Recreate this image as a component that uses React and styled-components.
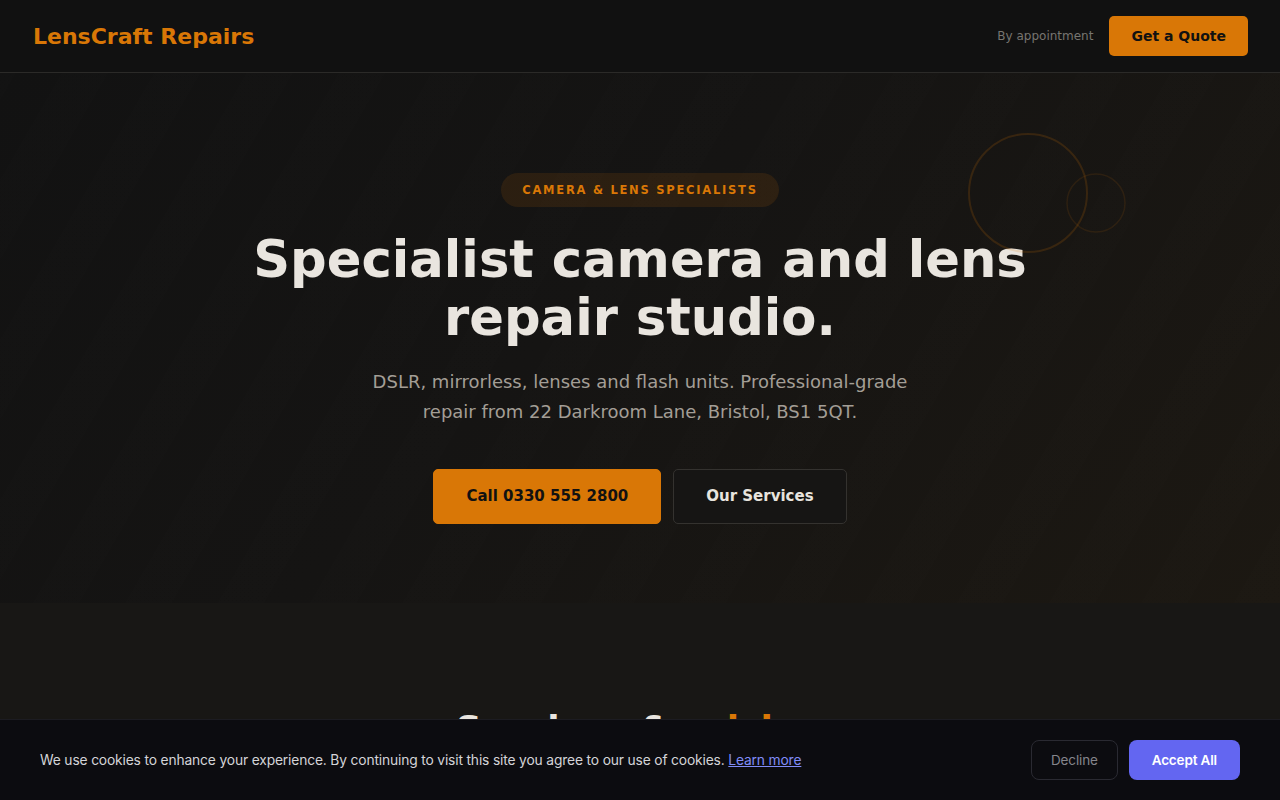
import styled, { createGlobalStyle } from "styled-components"

const GlobalStyle = createGlobalStyle`
    * { box-sizing: border-box; }
    body {
        margin: 0;
        background: #181715;
        font-family: "DejaVu Sans", "Liberation Sans", sans-serif;
        color: #e8e4de;
    }
`

export default function App(){
    return(
        <>
            <GlobalStyle/>
            <Nav>
                <Logo>LensCraft Repairs</Logo>
                <NavRight>
                    <Note>By appointment</Note>
                    <QuoteButton>Get a Quote</QuoteButton>
                </NavRight>
            </Nav>
            <Hero>
                <Rings width="200" height="140" viewBox="0 0 200 140">
                    <circle cx="80" cy="70" r="59" fill="none" stroke="rgba(217,119,6,0.17)" strokeWidth="2"/>
                    <circle cx="148" cy="80" r="29" fill="none" stroke="rgba(217,119,6,0.11)" strokeWidth="1.5"/>
                </Rings>
                <Badge>Camera &amp; Lens Specialists</Badge>
                <Title>Specialist camera and lens<br/>repair studio.</Title>
                <Lead>DSLR, mirrorless, lenses and flash units. Professional-grade repair from 22 Darkroom Lane, Bristol, BS1 5QT.</Lead>
                <Actions>
                    <Button primary>Call 0330 555 2800</Button>
                    <Button>Our Services</Button>
                </Actions>
            </Hero>
            <Services>
                <SectionTitle>Services &amp; <Accent>pricing</Accent></SectionTitle>
            </Services>
            <Cookie>
                <CookieText>
                    We use cookies to enhance your experience. By continuing to visit this site you agree to our use of cookies. <a href="#">Learn more</a>
                </CookieText>
                <CookieActions>
                    <Decline>Decline</Decline>
                    <Accept>Accept All</Accept>
                </CookieActions>
            </Cookie>
        </>
    )
}

const Nav = styled.header`
    height: 73px;
    padding: 0 32px 0 33px;
    background: #111111;
    border-bottom: 1px solid #2b2a28;
    display: flex;
    align-items: center;
    justify-content: space-between;
`

const Logo = styled.div`
    font-size: 22px;
    font-weight: 700;
    color: #d97706;
`

const NavRight = styled.div`
    display: flex;
    align-items: center;
    gap: 16px;
`

const Note = styled.span`
    font-size: 12px;
    color: #777570;
`

const QuoteButton = styled.button`
    height: 40px;
    padding: 0 22px;
    border: none;
    border-radius: 5px;
    background: #d97706;
    color: #111;
    font-family: inherit;
    font-size: 14px;
    font-weight: 700;
`

const Hero = styled.section`
    position: relative;
    height: 530px;
    padding-top: 100px;
    display: flex;
    flex-direction: column;
    align-items: center;
    text-align: center;
    overflow: hidden;
    background:
        repeating-linear-gradient(-60deg, rgba(255,255,255,0.004) 0 40px, rgba(0,0,0,0.01) 40px 80px),
        linear-gradient(135deg, #121212 0%, #151413 45%, #1c1812 100%);
`

const Rings = styled.svg`
    position: absolute;
    top: 50px;
    left: 948px;
`

const Badge = styled.div`
    height: 34px;
    padding: 0 21px;
    display: flex;
    align-items: center;
    border-radius: 17px;
    background: rgba(217,119,6,0.12);
    color: #d97706;
    font-size: 11.5px;
    font-weight: 700;
    letter-spacing: 1.75px;
    text-transform: uppercase;
`

const Title = styled.h1`
    margin: 23px 0 0;
    font-size: 51.2px;
    line-height: 1.14;
    font-weight: 700;
    color: #e9e5df;
`

const Lead = styled.p`
    margin: 20px 0 0;
    max-width: 560px;
    font-size: 18px;
    line-height: 30px;
    color: #a39e96;
`

const Actions = styled.div`
    margin-top: 42px;
    display: flex;
    gap: 12px;
`

const Button = styled.button`
    height: 55px;
    padding: 0 32px;
    border-radius: 5px;
    border: 1px solid ${p => p.primary ? "#d97706" : "#34322f"};
    background: ${p => p.primary ? "#d97706" : "#161514"};
    color: ${p => p.primary ? "#111" : "#e8e4de"};
    font-family: inherit;
    font-size: 15px;
    font-weight: 700;
`

const Services = styled.section`
    padding: 105px 0 80px;
    background: #181715;
    text-align: center;
`

const SectionTitle = styled.h2`
    margin: 0;
    font-size: 36px;
    font-weight: 700;
    color: #e9e5df;
`

const Accent = styled.span`
    color: #d97706;
`

const Cookie = styled.div`
    position: fixed;
    left: 0;
    right: 0;
    bottom: 0;
    height: 81px;
    padding: 0 40px;
    display: flex;
    align-items: center;
    justify-content: space-between;
    background: #0c0c10;
    border-top: 1px solid #1c1c22;
    font-family: Inter, "Liberation Sans", sans-serif;
    letter-spacing: -0.15px;
`

const CookieText = styled.p`
    margin: 0;
    font-size: 13.8px;
    color: #d4d4d8;

    a {
        color: #818cf8;
    }
`

const CookieActions = styled.div`
    display: flex;
    gap: 11px;
`

const Decline = styled.button`
    height: 40px;
    padding: 0 19px;
    border: 1px solid #2a2a32;
    border-radius: 8px;
    background: transparent;
    color: #85858c;
    font-family: inherit;
    letter-spacing: inherit;
    font-size: 13.5px;
`

const Accept = styled.button`
    height: 40px;
    padding: 0 23px;
    border: none;
    border-radius: 8px;
    background: #6366f1;
    color: #fff;
    font-family: inherit;
    letter-spacing: inherit;
    font-size: 13.5px;
    font-weight: 600;
`
